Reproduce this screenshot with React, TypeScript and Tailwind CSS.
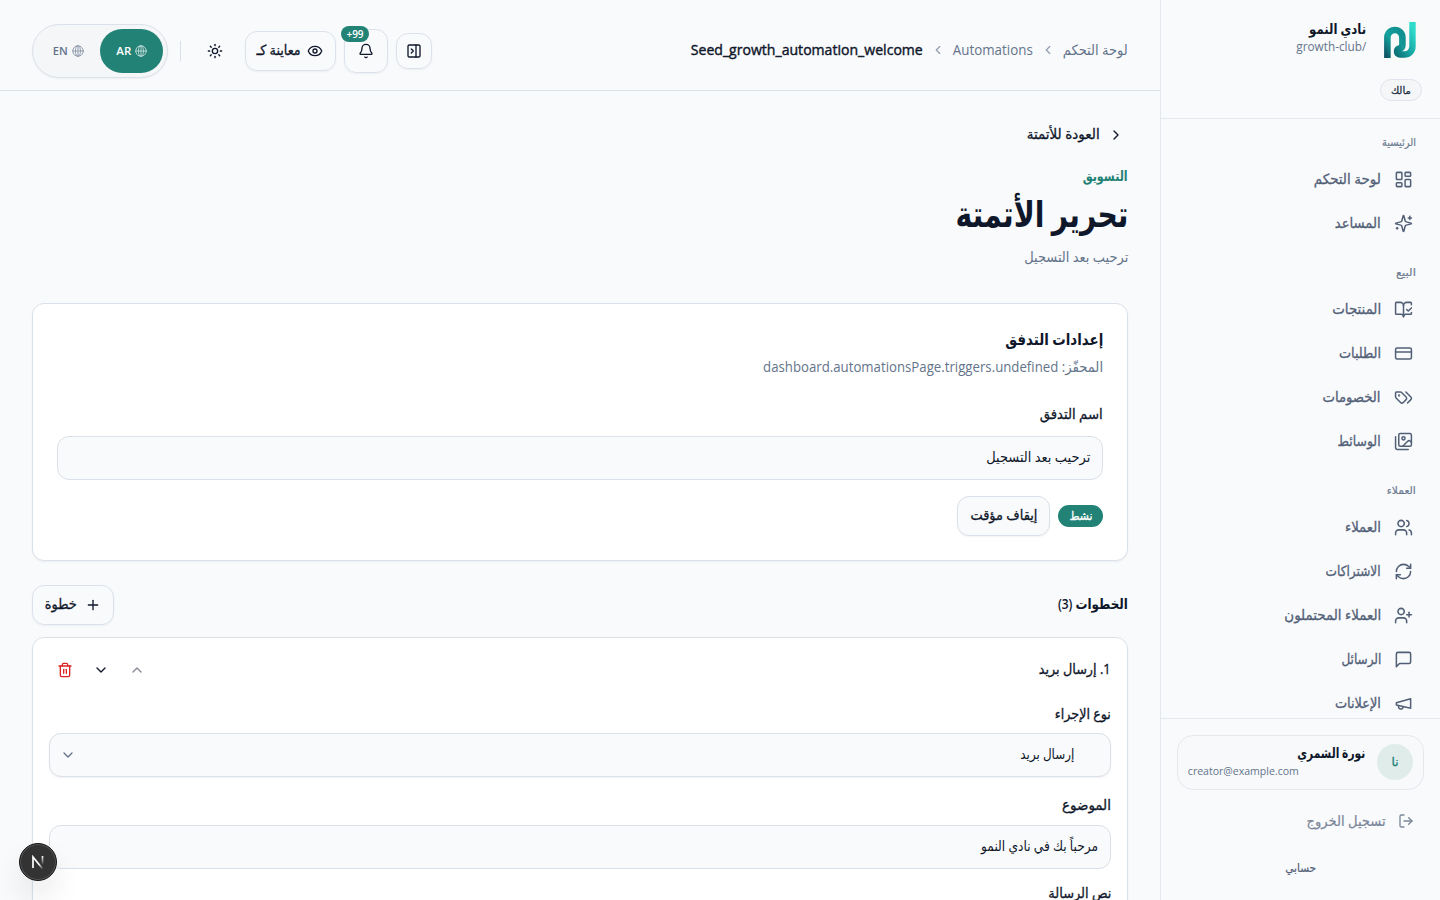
import { useLayoutEffect, useRef, useState } from "react";
import type { ReactNode } from "react";
import {
  Bell,
  BookOpenCheck,
  ChevronDown,
  ChevronLeft,
  ChevronRight,
  ChevronUp,
  CreditCard,
  Eye,
  LayoutDashboard,
  LogOut,
  PanelRightClose,
  Plus,
  RefreshCw,
  Sun,
  Trash2,
  UserPlus,
  Users,
} from "lucide-react";

// Condenses or widens a single line of text to the width given in className.
function Fit({ className, children }: { className: string; children: ReactNode }) {
  const box = useRef<HTMLSpanElement>(null);
  const text = useRef<HTMLSpanElement>(null);
  const [scale, setScale] = useState(1);

  useLayoutEffect(() => {
    if (box.current && text.current && text.current.offsetWidth) {
      setScale(box.current.offsetWidth / text.current.getBoundingClientRect().width);
    }
  }, []);

  return (
    <span ref={box} className={`flex shrink-0 ${className}`}>
      <span
        ref={text}
        className="block shrink-0 origin-right whitespace-nowrap"
        style={{ transform: `scaleX(${scale})` }}
      >
        {children}
      </span>
    </span>
  );
}

function Icon({ children, className = "size-[19px]" }: { children: ReactNode; className?: string }) {
  return (
    <svg
      viewBox="0 0 24 24"
      fill="none"
      stroke="currentColor"
      strokeWidth={1.9}
      strokeLinecap="round"
      strokeLinejoin="round"
      className={className}
    >
      {children}
    </svg>
  );
}

function Globe() {
  return (
    <Icon className="size-3 opacity-70">
      <circle cx="12" cy="12" r="10.5" />
      <ellipse cx="12" cy="12" rx="5" ry="10.5" />
      <path d="M1.5 12h21M12 1.5v21" />
    </Icon>
  );
}

function Logo() {
  return (
    <svg viewBox="0 0 42 42" className="size-[42px] shrink-0 rounded-xl bg-[#f8f9f9]">
      <defs>
        <linearGradient id="stem" x1="0" y1="1" x2="0.8" y2="0">
          <stop offset="0" stopColor="#0d5563" />
          <stop offset="0.5" stopColor="#14a19d" />
          <stop offset="1" stopColor="#128f90" />
        </linearGradient>
        <linearGradient id="hook" x1="0" y1="1" x2="0.8" y2="0">
          <stop offset="0" stopColor="#0e7378" />
          <stop offset="0.45" stopColor="#17a5a3" />
          <stop offset="1" stopColor="#2fdccb" />
        </linearGradient>
      </defs>
      <path
        d="M7.4 38V17.5a7.5 7.5 0 0 1 15 0V25q0 3.5-4.9 5"
        fill="none"
        stroke="url(#stem)"
        strokeWidth="6.6"
      />
      <path
        d="M32.5 2v24.5a8 8 0 0 1-8 8H20q-3-.2-3-3.2 0-2.8 4.5-3.6"
        fill="none"
        stroke="url(#hook)"
        strokeWidth="6.4"
      />
    </svg>
  );
}

const sparkles = (
  <Icon>
    <path d="M9.937 15.5A2 2 0 0 0 8.5 14.063l-6.135-1.582a.5.5 0 0 1 0-.962L8.5 9.936A2 2 0 0 0 9.937 8.5l1.582-6.135a.5.5 0 0 1 .963 0L14.063 8.5A2 2 0 0 0 15.5 9.937l6.135 1.581a.5.5 0 0 1 0 .964L15.5 14.063a2 2 0 0 0-1.437 1.437l-1.582 6.135a.5.5 0 0 1-.963 0z" />
    <path d="M20 3v4M22 5h-4M4 17v2M5 18H3" />
  </Icon>
);

const tags = (
  <Icon>
    <path d="m15 5 6.3 6.3a2.4 2.4 0 0 1 0 3.4L17 19" />
    <path d="M9.586 5.586A2 2 0 0 0 8.172 5H3a1 1 0 0 0-1 1v5.172a2 2 0 0 0 .586 1.414L8.29 18.29a2.426 2.426 0 0 0 3.42 0l3.58-3.58a2.426 2.426 0 0 0 0-3.42z" />
    <circle cx="6.5" cy="9.5" r=".5" fill="currentColor" />
  </Icon>
);

const images = (
  <Icon>
    <path d="M18 22H4a2 2 0 0 1-2-2V6" />
    <path d="m22 13-1.296-1.296a2.41 2.41 0 0 0-3.408 0L11 18" />
    <circle cx="12" cy="8" r="2" />
    <rect width="16" height="16" x="6" y="2" rx="2" />
  </Icon>
);

const message = (
  <Icon>
    <path d="M21 15a2 2 0 0 1-2 2H7l-4 4V5a2 2 0 0 1 2-2h14a2 2 0 0 1 2 2z" />
  </Icon>
);

const megaphone = (
  <Icon>
    <path d="m3 11 18-5v12L3 14v-3z" />
    <path d="M11.6 16.8a3 3 0 1 1-5.8-1.6" />
  </Icon>
);

const lucide = { size: 19, strokeWidth: 1.9 };

const groups = [
  {
    label: "الرئيسية",
    width: "w-[34px]",
    items: [
      { label: "لوحة التحكم", width: "w-[67px]", icon: <LayoutDashboard {...lucide} /> },
      { label: "المساعد", width: "w-[46px]", icon: sparkles },
    ],
  },
  {
    label: "البيع",
    width: "w-[20px]",
    items: [
      { label: "المنتجات", width: "w-[49px]", icon: <BookOpenCheck {...lucide} /> },
      { label: "الطلبات", width: "w-[42px]", icon: <CreditCard {...lucide} /> },
      { label: "الخصومات", width: "w-[58px]", icon: tags },
      { label: "الوسائط", width: "w-[43px]", icon: images },
    ],
  },
  {
    label: "العملاء",
    width: "w-[29px]",
    items: [
      { label: "العملاء", width: "w-[36px]", icon: <Users {...lucide} /> },
      { label: "الاشتراكات", width: "w-[55px]", icon: <RefreshCw {...lucide} /> },
      { label: "العملاء المحتملون", width: "w-[97px]", icon: <UserPlus {...lucide} /> },
      { label: "الرسائل", width: "w-[40px]", icon: message },
      { label: "الإعلانات", width: "w-[46px]", icon: megaphone },
    ],
  },
];

function Sidebar() {
  return (
    <aside className="flex h-full w-[280px] shrink-0 flex-col border-l border-[#e3e7ee]">
      <div className="h-[119px] shrink-0 border-b border-[#e3e7ee] pt-5 pr-[18px]">
        <div className="flex h-[43px] gap-3.5">
          <Logo />
          <div className="-mt-px">
            <Fit className="h-5 w-[57px] text-sm leading-[19px] font-bold">نادي النمو</Fit>
            <div dir="ltr" className="flex w-[57px] justify-end">
              <Fit className="h-4 w-[70px] justify-end text-xs leading-4 text-[#64748b]">growth-club/</Fit>
            </div>
          </div>
        </div>
        <div className="mt-4 flex h-[22px] w-[42px] items-center justify-center rounded-full border border-[#e0e5ed] bg-[#f4f6f8] text-[10px] text-[#263143] [-webkit-text-stroke:0.3px]">
          <Fit className="w-[20px]">مالك</Fit>
        </div>
      </div>

      <nav className="min-h-0 flex-1 overflow-hidden pt-3.5">
        {groups.map((group) => (
          <div key={group.label} className="mb-[17.5px]">
            <div className="flex h-[19px] items-center pr-6 pb-0.5 text-[11px] leading-4 text-[#6d7a90] [-webkit-text-stroke:0.2px]">
              <Fit className={group.width}>{group.label}</Fit>
            </div>
            <div className="pt-[5.5px]">
              {group.items.map((item) => (
                <a
                  key={item.label}
                  className="flex h-11 items-center gap-[13px] pr-[27px] text-sm text-[#526077]"
                >
                  {item.icon}
                  <Fit className={`-mt-px [-webkit-text-stroke:0.3px] ${item.width}`}>{item.label}</Fit>
                </a>
              ))}
            </div>
          </div>
        ))}
      </nav>

      <div className="h-[182px] shrink-0 border-t border-[#e3e7ee] px-4 pt-4">
        <div className="flex h-[55px] items-center gap-3 rounded-2xl border border-[#e5e8ed] bg-[#f7f9fb] px-2.5 pb-0.5">
          <div className="flex size-9 shrink-0 items-center justify-center rounded-full bg-[#dfecea] text-xs text-[#238276] [-webkit-text-stroke:0.3px]">
            <Fit className="w-[7px]">نا</Fit>
          </div>
          <div className="-mt-px min-w-0 flex-1">
            <Fit className="h-[19px] w-[68px] text-sm leading-[18px] font-bold">نورة الشمري</Fit>
            <div dir="ltr" className="flex">
              <Fit className="h-4 w-[111px] justify-end text-[11px] leading-4 text-[#64748b]">creator@example.com</Fit>
            </div>
          </div>
        </div>
        <a className="mt-[11px] flex h-10 items-center gap-3 pr-2.5 text-sm text-[#7b8799]">
          <LogOut size={16} />
          <Fit className="w-[79px] [-webkit-text-stroke:0.2px]">تسجيل الخروج</Fit>
        </a>
        <a className="mt-[9px] flex h-9 items-center justify-center text-xs text-[#526077] [-webkit-text-stroke:0.2px]">
          <Fit className="w-[31px]">حسابي</Fit>
        </a>
      </div>
    </aside>
  );
}

function Header() {
  return (
    <header className="flex h-[91px] shrink-0 items-center justify-between border-b border-[#d9e0e9] px-8 pt-3">
      <div className="-mt-0.5 flex items-center text-sm text-[#64748b]">
        <Fit className="w-[65px]">لوحة التحكم</Fit>
        <ChevronLeft className="mx-2 size-3.5 opacity-70" />
        <Fit className="w-[80px]">Automations</Fit>
        <ChevronLeft className="mx-2 size-3.5 opacity-70" />
        <Fit className="w-[232px] text-[#0f172a] [-webkit-text-stroke:0.4px]">
          Seed_growth_automation_welcome
        </Fit>
      </div>

      <div className="flex items-center">
        <button className="flex size-9 items-center justify-center rounded-xl border border-[#dce2ea] shadow-xs">
          <PanelRightClose size={16} />
        </button>
        <button className="relative mr-2 flex size-11 items-center justify-center rounded-xl border border-[#dce2ea] shadow-xs">
          <Bell size={16} />
          <span
            dir="ltr"
            className="absolute -top-1 -left-1 flex h-4 w-7 items-center justify-center rounded-full bg-[#238276] text-[10px] font-semibold text-white"
          >
            +99
          </span>
        </button>
        <button className="mr-2 flex h-10 w-[91px] items-center gap-1.5 rounded-xl border border-[#dce2ea] pr-3 text-sm shadow-xs">
          <Eye size={16} />
          <Fit className="-mt-0.5 w-[44px] [-webkit-text-stroke:0.3px]">معاينة كـ</Fit>
        </button>
        <button className="mr-3 flex size-9 items-center justify-center">
          <Sun size={16} />
        </button>
        <span className="mr-4 h-5 w-px bg-[#d9e0e9]" />
        <div className="mr-3 flex h-[54px] w-[136px] items-center rounded-full border border-[#dce2ea] bg-[#f4f6f8] px-1 text-[11px] font-semibold shadow-xs">
          <button className="flex h-11 w-[63px] items-center justify-center gap-1 rounded-full bg-[#238276] text-white">
            <Globe />
            <Fit className="w-[15px]">AR</Fit>
          </button>
          <button className="flex h-11 w-[63px] items-center justify-center gap-1 text-[#64748b]">
            <Globe />
            <Fit className="w-[15px]">EN</Fit>
          </button>
        </div>
      </div>
    </header>
  );
}

function FlowSettings() {
  return (
    <section className="mt-[34px] h-[258px] rounded-xl border border-[#dae1e9] bg-white px-6 pt-[23px] shadow-xs">
      <Fit className="h-6 w-[98px] text-base leading-6 font-semibold">إعدادات التدفق</Fit>
      <Fit className="mt-1 h-6 w-[340px] text-sm leading-6 text-[#64748b]">
        المحفّز: dashboard.automationsPage.triggers.undefined
      </Fit>
      <Fit className="mt-[25px] h-5 w-[63px] text-sm leading-5 [-webkit-text-stroke:0.3px]">اسم التدفق</Fit>
      <div className="mt-3 flex h-11 items-center rounded-xl border border-[#dae1e9] bg-[#f9fafc] px-3 pb-0.5 text-sm">
        <Fit className="w-[104px]">ترحيب بعد التسجيل</Fit>
      </div>
      <div className="mt-4 flex items-center gap-2">
        <span className="flex h-[22px] w-[45px] items-center justify-center rounded-full bg-[#238276] text-xs text-white [-webkit-text-stroke:0.3px]">
          <Fit className="w-[23px]">نشط</Fit>
        </span>
        <button className="flex h-10 w-[93px] items-center justify-center rounded-xl border border-[#dae1e9] bg-[#f9fafc] pb-0.5 text-sm shadow-xs">
          <Fit className="w-[67px] [-webkit-text-stroke:0.3px]">إيقاف مؤقت</Fit>
        </button>
      </div>
    </section>
  );
}

function Step() {
  return (
    <section className="mt-3 h-[420px] shrink-0 rounded-xl border border-[#dae1e9] bg-white px-4 pt-3.5 shadow-xs">
      <div className="flex h-9 items-center justify-between">
        <Fit className="-mt-0.5 w-[72px] text-sm [-webkit-text-stroke:0.3px]">1. إرسال بريد</Fit>
        <div className="flex">
          <button className="flex size-9 items-center justify-center opacity-50">
            <ChevronUp size={16} />
          </button>
          <button className="flex size-9 items-center justify-center">
            <ChevronDown size={16} />
          </button>
          <button className="ml-[-2px] flex size-9 items-center justify-center text-[#dc2626]">
            <Trash2 size={16} />
          </button>
        </div>
      </div>
      <Fit className="mt-4 h-5 w-[56px] text-sm leading-5 [-webkit-text-stroke:0.3px]">نوع الإجراء</Fit>
      <div className="mt-[9px] flex h-11 items-center justify-between rounded-xl border border-[#dae1e9] bg-[#f9fafc] pr-9 pl-2.5 text-sm shadow-xs">
        <Fit className="-mt-0.5 w-[54px]">إرسال بريد</Fit>
        <ChevronDown size={16} className="text-[#64748b]" />
      </div>
      <Fit className="mt-[18px] h-5 w-[49px] text-sm leading-5 [-webkit-text-stroke:0.3px]">الموضوع</Fit>
      <div className="mt-2.5 flex h-11 items-center rounded-xl border border-[#dae1e9] bg-[#f9fafc] px-3 pb-0.5 text-sm">
        <Fit className="w-[117px]">مرحباً بك في نادي النمو</Fit>
      </div>
      <Fit className="mt-3.5 h-5 w-[63px] text-sm leading-5 [-webkit-text-stroke:0.3px]">نص الرسالة</Fit>
    </section>
  );
}

function DevBadge() {
  return (
    <div className="absolute top-[843px] left-[19px] flex size-[38px] items-center justify-center rounded-full border border-[#171717] bg-[#333] shadow-[inset_0_0_0_1px_#555,0_16px_32px_-8px_rgba(0,0,0,0.24)]">
      <svg viewBox="0 0 14 14" fill="none" className="size-3.5">
        <defs>
          <linearGradient id="diagonal" x1="8" y1="9" x2="12" y2="14" gradientUnits="userSpaceOnUse">
            <stop stopColor="#fff" />
            <stop offset="1" stopColor="#fff" stopOpacity="0" />
          </linearGradient>
          <linearGradient id="bar" x1="11" y1="1" x2="11" y2="10" gradientUnits="userSpaceOnUse">
            <stop stopColor="#fff" />
            <stop offset="1" stopColor="#fff" stopOpacity="0" />
          </linearGradient>
        </defs>
        <path d="M2 13V2l10.2 12.5" stroke="url(#diagonal)" strokeWidth="1.7" />
        <path d="M11.5 1v9" stroke="url(#bar)" strokeWidth="1.7" />
      </svg>
    </div>
  );
}

export default function App() {
  return (
    <div
      dir="rtl"
      className="relative flex h-[900px] w-[1440px] overflow-hidden bg-[#f9fafc] font-['Open_Sans','DejaVu_Sans',sans-serif] text-[#0f172a]"
    >
      <Sidebar />
      <div className="flex min-w-0 flex-1 flex-col">
        <Header />
        <main className="min-h-0 flex-1 overflow-hidden px-8 pt-6">
          <a className="flex h-10 items-center gap-2 pr-1 text-sm">
            <ChevronRight size={16} />
            <Fit className="-mt-0.5 w-[73px] [-webkit-text-stroke:0.3px]">العودة للأتمتة</Fit>
          </a>
          <Fit className="mt-[11px] h-5 w-[45px] text-sm leading-5 font-semibold text-[#238276]">التسويق</Fit>
          <h1 className="mt-2">
            <Fit className="h-10 w-[173px] text-4xl leading-10 font-bold">تحرير الأتمتة</Fit>
          </h1>
          <Fit className="mt-[11px] h-6 w-[104px] text-sm leading-[23px] text-[#64748b]">ترحيب بعد التسجيل</Fit>

          <FlowSettings />

          <div className="mt-6 flex h-10 items-center justify-between">
            <Fit className="-mt-0.5 w-[70px] text-sm font-semibold">الخطوات (3)</Fit>
            <button className="flex h-10 w-[82px] items-center gap-2 rounded-xl border border-[#dae1e9] pr-3 text-sm shadow-xs">
              <Plus size={16} />
              <Fit className="-mt-0.5 w-[32px] [-webkit-text-stroke:0.3px]">خطوة</Fit>
            </button>
          </div>

          <Step />
        </main>
      </div>
      <DevBadge />
    </div>
  );
}
